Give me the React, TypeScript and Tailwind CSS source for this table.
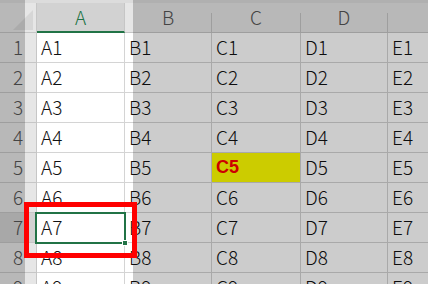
import React from 'react';

const cols = [
  { key: 'A', w: 'w-[88px]' },
  { key: 'B', w: 'w-[87px]' },
  { key: 'C', w: 'w-[89px]' },
  { key: 'D', w: 'w-[87px]' },
  { key: 'E', w: 'w-[100px]' },
];

const rows = [1, 2, 3, 4, 5, 6, 7, 8, 9];

const HeaderRow = () => (
  <div className="flex h-[30px]">
    {/* select-all corner */}
    <div className="relative w-[37px] shrink-0 bg-[#e6e6e6] border-r border-b border-[#c6c6c6]">
      <svg width="36" height="29" className="absolute left-0 top-0">
        <polygon points="13,27 33,27 33,7" fill="#d6d6d6" />
      </svg>
    </div>
    {cols.map((c) =>
      c.key === 'A' ? (
        <div
          key={c.key}
          className={`${c.w} shrink-0 flex items-center justify-center bg-[#d2d2d2] border-r border-[#c6c6c6] border-b-2 border-b-[#217346] text-[#217346]`}
        >
          {c.key}
        </div>
      ) : (
        <div key={c.key} className={`${c.w} shrink-0 flex bg-[#e6e6e6] border-b border-[#c6c6c6] text-[#555]`}>
          <span className="flex-1 flex items-center justify-center">{c.key}</span>
          <span className="w-px h-[19px] self-end bg-[#c6c6c6]" />
        </div>
      )
    )}
  </div>
);

const Cell = ({ col, row }: { col: string; row: number }) => {
  const id = `${col}${row}`;
  if (id === 'C5') {
    return (
      <div className="flex items-center pl-[4px] h-full bg-[#ffff00] border-r border-b border-[#d4d4d4] font-['Liberation_Sans',sans-serif] font-bold text-[18px] text-[#ff0000]">
        {id}
      </div>
    );
  }
  return (
    <div className="flex items-center pl-[4px] h-full border-r border-b border-[#d4d4d4] text-[#111]">{id}</div>
  );
};

export default function App() {
  return (
    <div className="relative w-[428px] h-[284px] overflow-hidden bg-white font-['Noto_Sans_CJK_JP',sans-serif] font-light text-[19px]">
      <div className="h-[3px] bg-[#dcdcdc]" />
      <HeaderRow />
      {rows.map((r) => (
        <div key={r} className="flex h-[30px]">
          <div
            className={`w-[37px] shrink-0 flex items-center justify-center border-r border-b border-[#c6c6c6] text-[#555] ${
              r === 7 ? 'bg-[#d2d2d2]' : 'bg-[#e6e6e6]'
            }`}
          >
            {r}
          </div>
          {cols.map((c) => (
            <div key={c.key} className={`${c.w} shrink-0 h-full`}>
              <Cell col={c.key} row={r} />
            </div>
          ))}
        </div>
      ))}

      {/* active cell A7 */}
      <div className="absolute left-[35px] top-[212px] w-[91px] h-[32px] border-2 border-[#217346]" />
      <div className="absolute left-[122px] top-[240px] w-[6px] h-[6px] bg-[#217346] border border-white" />

      {/* spotlight on column A */}
      <div className="absolute left-[25px] top-0 w-[108px] h-[284px] shadow-[0_0_0_600px_rgba(0,0,0,0.2)]" />

      {/* red callout box */}
      <div className="absolute left-[24px] top-[202px] w-[113px] h-[56px] border-[5px] border-[#ff0000]" />
    </div>
  );
}
